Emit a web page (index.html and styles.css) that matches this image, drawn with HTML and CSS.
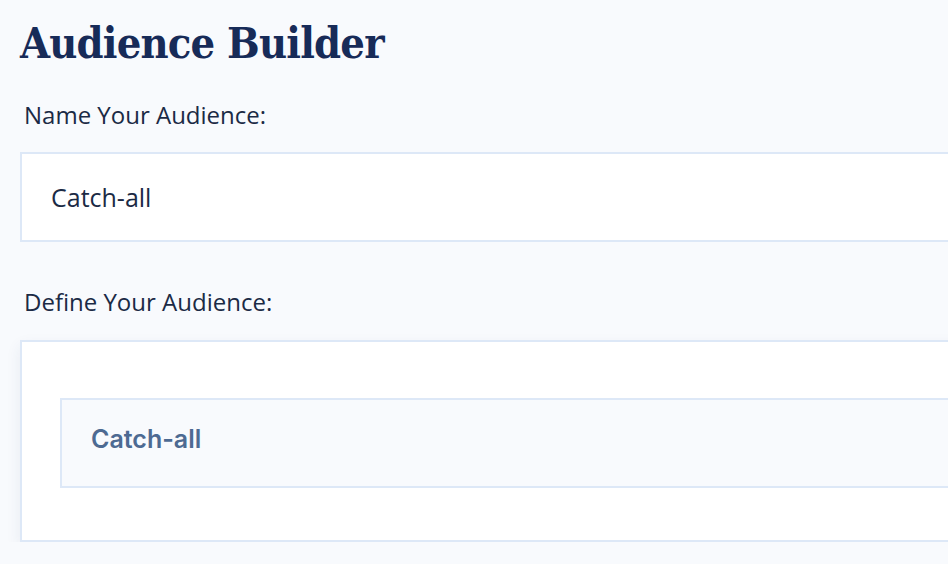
FILE: index.html
```html
<!DOCTYPE html>
<html>
<head>
<meta charset="utf-8">
<link rel="stylesheet" href="styles.css">
</head>
<body>
<main class="page">
  <h1 class="title">Audience Builder</h1>
  <section class="field">
    <label class="label" for="aud-name">Name Your Audience:</label>
    <div class="input" id="aud-name">Catch-all</div>
  </section>
  <section class="field field-define">
    <div class="label">Define Your Audience:</div>
    <div class="card">
      <div class="segment">Catch-all</div>
    </div>
  </section>
</main>
</body>
</html>
```
FILE: styles.css
```css
html, body {
  margin: 0;
  padding: 0;
  background: #f8fafd;
  overflow: hidden;
}
.page {
  width: 1300px;
  padding: 0 0 0 20px;
  box-sizing: border-box;
  font-family: "Open Sans", "Noto Sans", sans-serif;
  color: #1b2a45;
}
.title {
  margin: 0;
  padding-top: 17px;
  font-family: "DejaVu Serif", serif;
  font-stretch: condensed;
  font-weight: 700;
  font-size: 43px;
  line-height: 52px;
  color: #172b58;
  letter-spacing: -0.8px;
}
.field {
  display: flex;
  flex-direction: column;
}
.label {
  padding-left: 4px;
  font-size: 24px;
  line-height: 32px;
  margin-top: 30px;
  margin-bottom: 21px;
}
.input {
  height: 86px;
  border: 2px solid #dde8f7;
  background: #fff;
  display: flex;
  align-items: center;
  padding-left: 29px;
  font-size: 25px;
}
.field-define .label {
  margin-top: 44px;
  margin-bottom: 22px;
}
.card {
  border: 2px solid #dde8f7;
  background: #fff;
  padding: 56px 0 52px 38px;
  box-shadow: 0 6px 14px rgba(40, 70, 120, 0.08);
}
.segment {
  height: 78px;
  box-sizing: content-box;
  padding-bottom: 8px;
  border: 2px solid #dde8f7;
  background: #f8fafd;
  display: flex;
  align-items: center;
  padding-left: 29px;
  font-family: "Inter", "Roboto", sans-serif;
  font-weight: 600;
  font-size: 25px;
  color: #4d6a92;
}
```
